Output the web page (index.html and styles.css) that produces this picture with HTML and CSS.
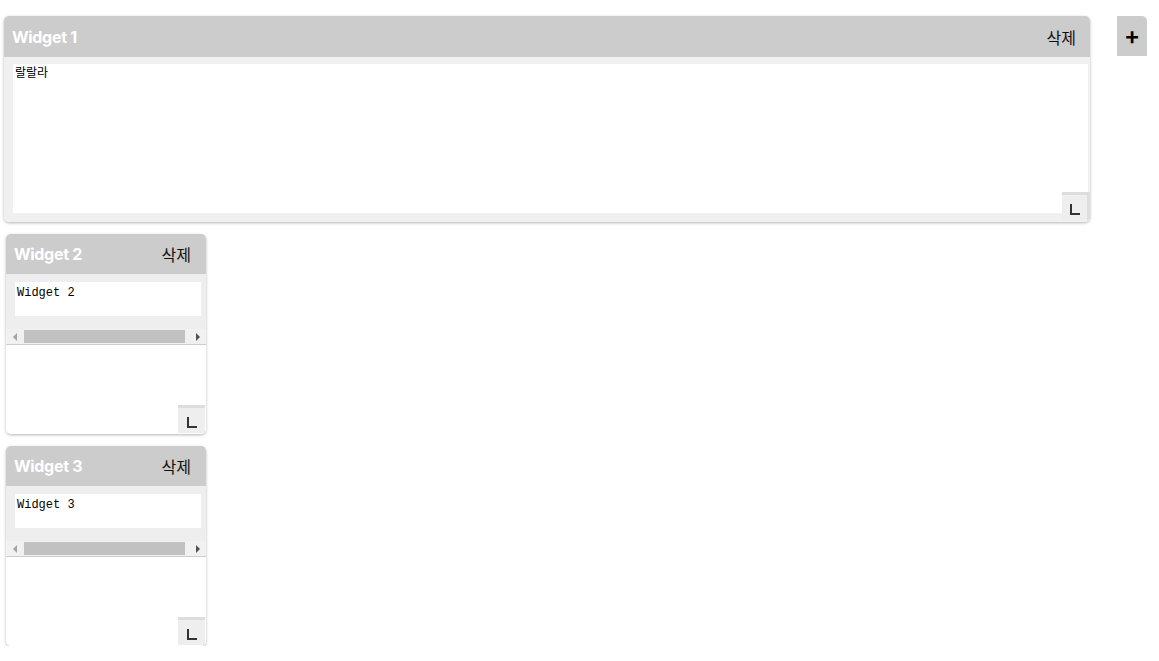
FILE: index.html
```html
<!DOCTYPE html>
<html lang="ko">
<head>
    <meta charset="utf-8">
    <title>Widgets</title>
    <link rel="stylesheet" href="styles.css">
</head>
<body>
    <div class="board">
        <div class="column">
            <div class="widget widget-wide">
                <div class="widget-head">
                    <span class="widget-title">Widget 1</span>
                    <span class="widget-del">삭제</span>
                </div>
                <div class="widget-body">
                    <textarea class="memo">랄랄라</textarea>
                </div>
                <span class="resize-handle"><i></i></span>
            </div>

            <div class="widget widget-small">
                <div class="widget-head">
                    <span class="widget-title">Widget 2</span>
                    <span class="widget-del">삭제</span>
                </div>
                <div class="widget-scroll">
                    <textarea class="memo memo-small">Widget 2</textarea>
                    <div class="hscroll">
                        <span class="arrow arrow-left"></span>
                        <span class="thumb"></span>
                        <span class="arrow arrow-right"></span>
                    </div>
                </div>
                <div class="widget-rest"></div>
                <span class="resize-handle"><i></i></span>
            </div>

            <div class="widget widget-small">
                <div class="widget-head">
                    <span class="widget-title">Widget 3</span>
                    <span class="widget-del">삭제</span>
                </div>
                <div class="widget-scroll">
                    <textarea class="memo memo-small">Widget 3</textarea>
                    <div class="hscroll">
                        <span class="arrow arrow-left"></span>
                        <span class="thumb"></span>
                        <span class="arrow arrow-right"></span>
                    </div>
                </div>
                <div class="widget-rest"></div>
                <span class="resize-handle"><i></i></span>
            </div>
        </div>
        <div class="add-btn">+</div>
    </div>
</body>
</html>
```

FILE: styles.css
```css
body {
    margin: 0;
    font-family: Inter, "Noto Sans CJK KR", sans-serif;
    background: #fff;
}

.board {
    display: flex;
    align-items: flex-start;
    padding: 16px 0 0 4px;
}

.column {
    display: flex;
    flex-direction: column;
    gap: 12px;
}

.widget {
    position: relative;
    display: flex;
    flex-direction: column;
    background: #fff;
    border-radius: 5px;
    overflow: hidden;
    box-shadow: 0 1px 3px rgba(0, 0, 0, 0.3);
}

.widget-wide {
    width: 1086px;
    height: 206px;
}

.widget-small {
    width: 200px;
    height: 200px;
    margin-left: 2px;
}

.widget-head {
    height: 40px;
    flex: none;
    display: flex;
    align-items: center;
    justify-content: space-between;
    padding: 0 15px 0 8px;
    background: #ccc;
}

.widget-wide .widget-head {
    height: 41px;
    padding-right: 14px;
}

.widget-title {
    color: #fff;
    font-size: 16px;
    font-weight: 700;
    letter-spacing: -0.3px;
}

.widget-del {
    color: #111;
    font-size: 16px;
}

.widget-body {
    flex: 1;
    display: flex;
    padding: 7px 2px 9px 9px;
    background: #f0f0f0;
}

.memo {
    flex: 1;
    box-sizing: border-box;
    margin: 0;
    border: 0;
    padding: 2px;
    resize: none;
    outline: none;
    overflow: hidden;
    background: #fff;
    color: #000;
    font-family: "Liberation Mono", "Noto Sans CJK KR", monospace;
    font-size: 12px;
    line-height: 16px;
}

.widget-scroll {
    flex: none;
    display: flex;
    flex-direction: column;
    padding-top: 8px;
    background: #eee;
    border-bottom: 1px solid #ccc;
}

.memo-small {
    flex: none;
    height: 34px;
    margin: 0 5px 0 9px;
    padding: 3px 2px;
}

.hscroll {
    display: flex;
    align-items: center;
    height: 15px;
    margin-top: 13px;
    background: #f1f1f1;
}

.arrow {
    width: 17px;
    display: flex;
    justify-content: center;
}

.arrow-left::before,
.arrow-right::before {
    content: "";
    border-top: 4px solid transparent;
    border-bottom: 4px solid transparent;
}

.arrow-left::before {
    border-right: 4px solid #a3a3a3;
}

.arrow-right::before {
    border-left: 4px solid #505050;
}

.thumb {
    width: 161px;
    height: 13px;
    margin: 0 4px 0 1px;
    background: #c1c1c1;
}

.widget-rest {
    flex: 1;
    background: #fff;
}

.resize-handle {
    position: absolute;
    right: 1px;
    bottom: 1px;
    width: 27px;
    height: 28px;
    box-sizing: border-box;
    border-top: 3px solid #ddd;
    background: #eee;
    display: flex;
    align-items: center;
    justify-content: center;
}

.widget-wide .resize-handle {
    right: 0;
    bottom: 2px;
    width: 28px;
    border-right: 3px solid #ddd;
}

.resize-handle i {
    width: 8px;
    height: 9px;
    margin: 3px 0 0 1px;
    border-left: 2px solid #333;
    border-bottom: 2px solid #333;
}

.add-btn {
    width: 30px;
    height: 40px;
    margin-left: 27px;
    display: flex;
    align-items: center;
    justify-content: center;
    background: #ccc;
    border-radius: 0 5px 0 0;
    color: #000;
    font-size: 24px;
    font-weight: 600;
    line-height: 1;
}
```
